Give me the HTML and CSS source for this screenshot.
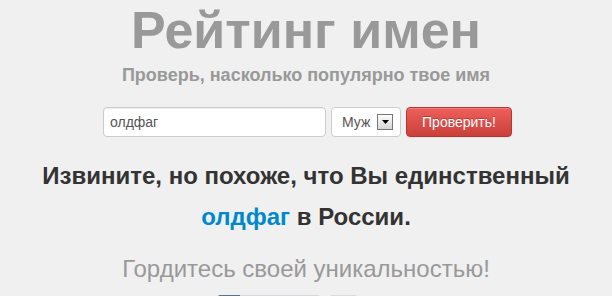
FILE: index.html
```html
<!DOCTYPE html>
<html>
<head>
	<meta charset="utf-8">
	<title>Рейтинг имен</title>
	<link rel="stylesheet" href="styles.css">
</head>
<body>
	<div id="page">
		<h1 id="title">Рейтинг имен</h1>
		<div id="subtitle">Проверь, насколько популярно твое имя</div>

		<form id="checkForm">
			<input type="text" id="name" name="name" value="олдфаг">
			<div class="select">
				<span class="select-value">Муж</span>
				<span class="select-arrow">
					<svg width="7" height="4" viewBox="0 0 7 4"><path d="M0 0H7L3.5 4Z" fill="#000"/></svg>
				</span>
			</div>
			<button type="submit" class="btn-danger">Проверить!</button>
		</form>

		<h2 id="result">Извините, но похоже, что Вы единственный <a href="#">олдфаг</a> в России.</h2>

		<p id="lead">Гордитесь своей уникальностью!</p>

		<div id="share">
			<span class="share-btn"><span class="share-icon"></span></span>
			<span class="share-count"></span>
		</div>
	</div>
</body>
</html>
```
FILE: styles.css
```css
body {
	margin: 0;
	background: #f0f0f0;
	font-family: "Liberation Sans", Arial, sans-serif;
	color: #333;
	overflow: hidden;
}

#page {
	text-align: center;
	height: 296px;
	overflow: hidden;
}

#title {
	margin: 0;
	font-size: 52px;
	line-height: 60px;
	color: #999;
	font-weight: bold;
}

#subtitle {
	margin-top: 4px;
	font-size: 18px;
	line-height: 22px;
	font-weight: bold;
	color: #999;
}

#checkForm {
	display: flex;
	justify-content: center;
	gap: 5px;
	margin: 21px 0 0 3px;
	height: 30px;
}

#checkForm input {
	box-sizing: border-box;
	width: 223px;
	height: 30px;
	padding: 4px 6px;
	border: 1px solid #ccc;
	border-radius: 4px;
	background: #fff;
	font-family: inherit;
	font-size: 14px;
	color: #555;
	box-shadow: inset 0 1px 1px rgba(0,0,0,0.075);
}

.select {
	box-sizing: border-box;
	width: 70px;
	height: 30px;
	border: 1px solid #ccc;
	border-radius: 4px;
	background: #fff;
	display: flex;
	align-items: center;
	padding-left: 10px;
	font-size: 14px;
	color: #555;
}

.select-value {
	flex: 1;
	text-align: left;
}

.select-arrow {
	box-sizing: border-box;
	width: 16px;
	height: 16px;
	margin-right: 7px;
	border: 1px solid #777;
	background: linear-gradient(#fdfdfd, #d6d6d6);
	display: flex;
	align-items: center;
	justify-content: center;
}

.btn-danger {
	box-sizing: border-box;
	width: 106px;
	height: 30px;
	border: 1px solid #b33630;
	border-radius: 4px;
	background: linear-gradient(#ee5f5b, #c9403a);
	color: #fff;
	font-family: inherit;
	font-size: 14px;
	text-shadow: 0 -1px 0 rgba(0,0,0,0.25);
	box-shadow: inset 0 1px 0 rgba(255,255,255,0.2), 0 1px 2px rgba(0,0,0,0.05);
}

#result {
	margin: 18px auto 0;
	width: 580px;
	font-size: 24px;
	line-height: 41px;
	font-weight: bold;
	color: #333;
}

#result a {
	color: #0088cc;
	text-decoration: none;
}

#lead {
	margin: 17px 0 0;
	font-size: 24px;
	line-height: 30px;
	color: #999;
}

#share {
	display: flex;
	justify-content: center;
	gap: 10px;
	margin-top: 11px;
	margin-left: -38px;
}

.share-btn {
	width: 102px;
	height: 22px;
	background: #d4d7dc;
	border-radius: 2px;
	overflow: hidden;
}

.share-icon {
	display: block;
	width: 22px;
	height: 22px;
	background: #5b7390;
}

.share-count {
	width: 27px;
	height: 22px;
	background: #dcdcdc;
	border-radius: 2px;
}
```
